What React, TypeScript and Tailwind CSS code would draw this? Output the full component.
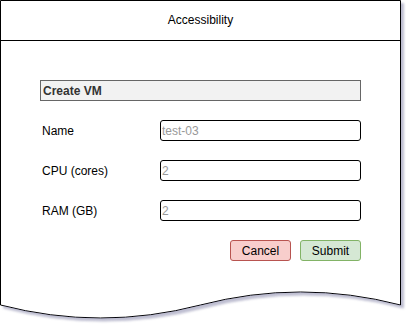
import React from 'react';

const fields = [
  { label: 'Name', value: 'test-03' },
  { label: 'CPU (cores)', value: '2' },
  { label: 'RAM (GB)', value: '2' },
];

const PageOutline = () => (
  <svg className="absolute left-0 top-0" width="412" height="332" viewBox="0 0 412 332">
    <defs>
      <filter id="shadow" x="-5%" y="-5%" width="115%" height="115%">
        <feDropShadow dx="3" dy="3" stdDeviation="1" floodColor="#8888aa" floodOpacity="0.55" />
      </filter>
    </defs>
    <path
      d="M0.5 0.5 H400.5 V305 Q300.5 279 200.5 305 Q100.5 331 0.5 305 Z"
      fill="#ffffff"
      stroke="#000000"
      strokeWidth="1"
      filter="url(#shadow)"
    />
  </svg>
);

export default function App() {
  return (
    <div className="relative w-[412px] h-[332px] bg-white overflow-hidden font-['Liberation_Sans',Arial,sans-serif] text-[12px] text-black">
      <PageOutline />
      <div className="relative w-[401px] flex flex-col">
        <div className="h-[41px] border-b border-black flex items-center justify-center">
          Accessibility
        </div>

        <div className="pl-[40px] pt-[39px] flex flex-col">
          <div className="w-[321px] h-[21px] border border-[#666666] bg-[#f2f2f2] flex items-center pl-[2px] font-bold text-[#333333]">
            Create VM
          </div>

          <div className="flex flex-col gap-[19px] mt-[19px]">
            {fields.map((f) => (
              <div key={f.label} className="flex items-center h-[21px]">
                <span className="w-[120px] pl-[2px]">{f.label}</span>
                <input
                  readOnly
                  value={f.value}
                  className="w-[201px] h-[21px] border border-black rounded-[3px] px-[1px] text-[12px] text-[#999999] outline-none bg-white"
                />
              </div>
            ))}
          </div>

          <div className="flex justify-end gap-[9px] w-[321px] mt-[19px]">
            <button className="w-[61px] h-[21px] border border-[#b85450] bg-[#f8cecc] rounded-[3px] text-[12px]">
              Cancel
            </button>
            <button className="w-[61px] h-[21px] border border-[#82b366] bg-[#d5e8d4] rounded-[3px] text-[12px]">
              Submit
            </button>
          </div>
        </div>
      </div>
    </div>
  );
}
